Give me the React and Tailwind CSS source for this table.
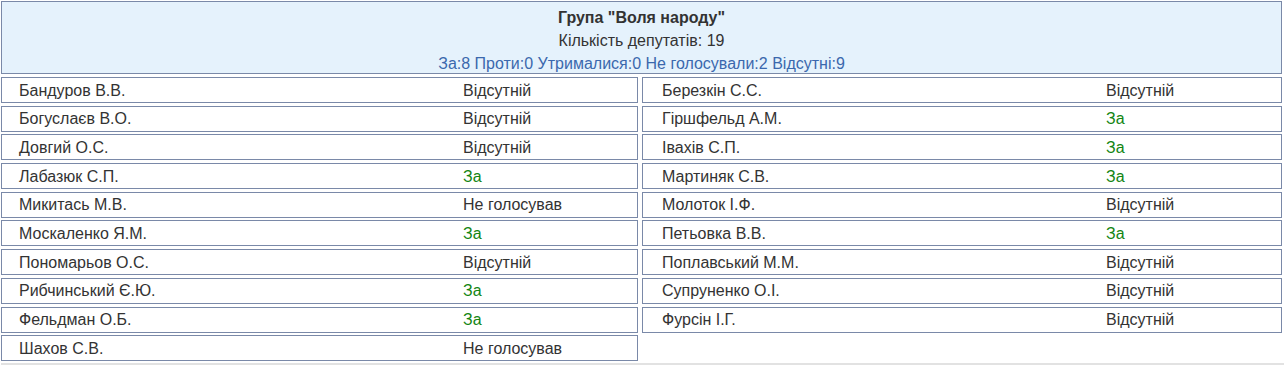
import React from "react";

const left = [
  ["Бандуров В.В.", "Відсутній"],
  ["Богуслаєв В.О.", "Відсутній"],
  ["Довгий О.С.", "Відсутній"],
  ["Лабазюк С.П.", "За"],
  ["Микитась М.В.", "Не голосував"],
  ["Москаленко Я.М.", "За"],
  ["Пономарьов О.С.", "Відсутній"],
  ["Рибчинський Є.Ю.", "За"],
  ["Фельдман О.Б.", "За"],
  ["Шахов С.В.", "Не голосував"],
];

const right = [
  ["Березкін С.С.", "Відсутній"],
  ["Гіршфельд А.М.", "За"],
  ["Івахів С.П.", "За"],
  ["Мартиняк С.В.", "За"],
  ["Молоток І.Ф.", "Відсутній"],
  ["Петьовка В.В.", "За"],
  ["Поплавський М.М.", "Відсутній"],
  ["Супруненко О.І.", "Відсутній"],
  ["Фурсін І.Г.", "Відсутній"],
];

const Cell = ({ name, vote, side }) => (
  <div
    className={`flex items-center h-[26px] pt-[1px] border border-[#7a89a8] bg-white ${
      side === "left" ? "pl-[17px]" : "pl-[19px]"
    }`}
  >
    <span className="w-[444px]">{name}</span>
    <span className={vote === "За" ? "text-[#128512]" : ""}>{vote}</span>
  </div>
);

export default function App() {
  const rows = [];
  for (let i = 0; i < left.length; i++) {
    rows.push(<Cell key={"l" + i} name={left[i][0]} vote={left[i][1]} side="left" />);
    rows.push(
      right[i] ? (
        <Cell key={"r" + i} name={right[i][0]} vote={right[i][1]} side="right" />
      ) : (
        <div key={"r" + i} />
      )
    );
  }

  return (
    <div className="w-[1284px] h-[366px] bg-white pt-[1px] pl-[1px] font-['Liberation_Sans',Arial,sans-serif] text-[16px] leading-none text-[#333]">
      {/* Header */}
      <div className="w-[1281px] h-[73px] border border-[#7a89a8] bg-[#e5f2fc] flex flex-col items-center pt-[7px] gap-[5px] leading-[18px]">
        <div className="font-bold">Група "Воля народу"</div>
        <div>Кількість депутатів: 19</div>
        <div className="text-[#3b68ad]">
          За:8 Проти:0 Утрималися:0 Не голосували:2 Відсутні:9
        </div>
      </div>

      {/* Votes */}
      <div className="grid grid-cols-[637px_640px] gap-x-[4px] gap-y-[2.7px] mt-[3px] pb-[2px] w-[1283px] border-b-2 border-[#e2e2e2]">
        {rows}
      </div>
    </div>
  );
}
